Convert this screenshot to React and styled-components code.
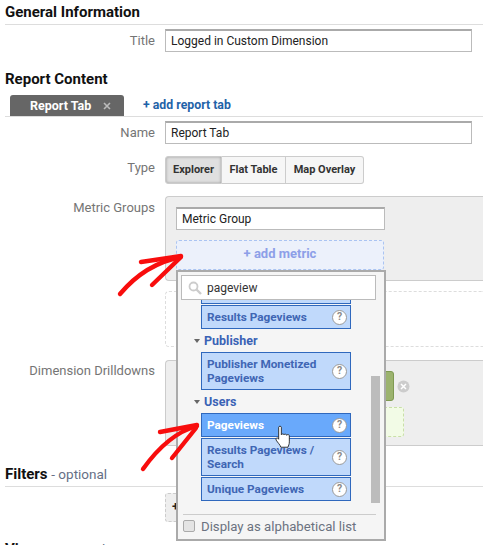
import React from 'react';
import styled, { createGlobalStyle } from 'styled-components';

const GlobalStyle = createGlobalStyle`
  html, body {
    margin: 0;
    padding: 0;
    background: #fff;
    font-family: Roboto, "Liberation Sans", sans-serif;
  }
`;

const Page = styled.div`
  position: relative;
  width: 483px;
  height: 545px;
  overflow: hidden;
  background: #fff;
`;

const Heading = styled.div`
  margin: ${(p) => p.$top}px 0 0 5px;
  height: ${(p) => p.$height || 19}px;
  line-height: ${(p) => p.$line || p.$height || 19}px;
  font-size: 15px;
  font-weight: 700;
  color: #111;
  border-bottom: ${(p) => (p.$rule ? '1px solid #ddd' : 'none')};

  span {
    font-size: 13.5px;
    font-weight: 400;
    color: #666f85;
  }
`;

const Row = styled.div`
  display: grid;
  grid-template-columns: 155px 1fr;
  column-gap: 10px;
  margin-top: ${(p) => p.$top}px;
`;

const Label = styled.div`
  text-align: right;
  font-size: 13px;
  line-height: ${(p) => p.$line || 23}px;
  color: #757575;
`;

const TextInput = styled.div`
  box-sizing: border-box;
  width: ${(p) => p.$width || 307}px;
  height: 23px;
  padding-left: 5px;
  line-height: 20px;
  font-size: 12px;
  color: #222;
  background: #fff;
  border: 1px solid #bbb;
  border-top: 2px solid #aaa;
`;

const TabBar = styled.div`
  display: flex;
  align-items: stretch;
  height: 21px;
  margin: 6px 0 0 5px;
  padding-left: 5px;
  border-bottom: 1px solid #ddd;
`;

const ActiveTab = styled.div`
  display: flex;
  align-items: center;
  justify-content: space-between;
  box-sizing: border-box;
  width: 114px;
  padding: 0 13px 0 20px;
  border-radius: 3px 3px 0 0;
  background: #666;
  color: #fff;
  font-size: 12.5px;
  font-weight: 700;

  svg {
    display: block;
  }
`;

const AddTab = styled.div`
  margin-left: 19px;
  line-height: 21px;
  font-size: 12.3px;
  font-weight: 700;
  color: #1f63a8;
`;

const ButtonGroup = styled.div`
  display: flex;
  width: 199px;
  height: 28px;
`;

const TypeButton = styled.div`
  box-sizing: border-box;
  flex: 0 0 ${(p) => p.$width}px;
  text-align: center;
  line-height: 26px;
  font-size: 11px;
  font-weight: 700;
  color: #333;
  background: ${(p) => (p.$active ? '#e0e0e0' : '#f6f6f6')};
  border: 1px solid #ccc;
  border-left-width: ${(p) => (p.$first ? 1 : 0)}px;
  border-radius: ${(p) => p.$radius};
  box-shadow: ${(p) => (p.$active ? 'inset 0 0 3px #999' : 'none')};
`;

const Panel = styled.div`
  box-sizing: border-box;
  height: ${(p) => p.$height}px;
  padding: 10px;
  background: #eee;
  border: 1px solid #ccc;
  border-right: none;
  border-radius: 4px 0 0 4px;
`;

const AddMetric = styled.div`
  box-sizing: border-box;
  width: 208px;
  height: 30px;
  margin-top: 10px;
  text-align: center;
  line-height: 26px;
  font-size: 13px;
  font-weight: 700;
  color: #8d9fe8;
  background: #ecf1fb;
  border: 1px dashed #aac4f2;
  border-radius: 3px;
`;

const DashedGroup = styled.div`
  box-sizing: border-box;
  height: 56px;
  margin-top: 10px;
  border: 1px dashed #ddd;
  border-right: none;
  border-radius: 4px 0 0 4px;
`;

const Chip = styled.div`
  box-sizing: border-box;
  width: 218px;
  height: 30px;
  background: #9cb36f;
  border: 1px solid #7f9a52;
  border-radius: 3px;
`;

const ChipRow = styled.div`
  display: flex;
  align-items: center;
  gap: 3px;
`;

const GreenSlot = styled.div`
  box-sizing: border-box;
  width: 228px;
  height: 30px;
  margin-top: 6px;
  background: #f2fbe6;
  border: 1px dashed #c9dfa8;
  border-radius: 3px;
`;

const AddFilter = styled.div`
  box-sizing: border-box;
  width: 60px;
  height: 29px;
  margin: 6px 0 0 165px;
  padding-left: 6px;
  line-height: 26px;
  font-size: 13px;
  font-weight: 700;
  color: #222;
  background: #eee;
  border: 1px dashed #ccc;
  border-radius: 3px;
`;

const Dropdown = styled.div`
  position: absolute;
  left: 176px;
  top: 270px;
  box-sizing: border-box;
  display: flex;
  flex-direction: column;
  width: 210px;
  height: 271px;
  padding: 3px 4px 0;
  background: #f5f5f5;
  border: 2px solid #aaa;
`;

const SearchBox = styled.div`
  position: relative;
  z-index: 1;
  flex: none;
  display: flex;
  align-items: center;
  gap: 5px;
  box-sizing: border-box;
  width: 195px;
  height: 25px;
  margin-left: -1px;
  padding-left: 6px;
  font-size: 12px;
  color: #333;
  background: #fff;
  border: 1px solid #bbb;
`;

const ListArea = styled.div`
  position: relative;
  flex: none;
  height: 212px;
  overflow: hidden;
`;

const List = styled.div`
  margin-top: -20px;
  padding-left: 19px;
`;

const Group = styled.div`
  display: flex;
  align-items: center;
  gap: 4px;
  height: 23px;
  margin: -1px 0 0 -7px;
  font-size: 12.5px;
  font-weight: 700;
  color: #3a62b5;
`;

const Caret = styled.i`
  width: 0;
  height: 0;
  border-style: solid;
  border-width: 4px 3.5px 0;
  border-color: #666 transparent transparent;
`;

const Item = styled.div`
  display: flex;
  align-items: center;
  justify-content: space-between;
  box-sizing: border-box;
  width: 150px;
  margin-bottom: 1px;
  padding: 4px 3px 4px 5px;
  min-height: 24px;
  line-height: 14px;
  font-size: 11.8px;
  font-weight: 700;
  color: ${(p) => (p.$active ? '#fff' : '#3f66b4')};
  background: ${(p) => (p.$active ? '#69a9fb' : '#c0d9fb')};
  border: 1px solid #2f68bd;

  span {
    max-width: 122px;
  }
`;

const Help = styled.b`
  flex: none;
  box-sizing: border-box;
  width: 15px;
  height: 15px;
  margin: -1px 0;
  text-align: center;
  line-height: 11.5px;
  font-size: 10.5px;
  font-weight: 700;
  color: #8a8a8a;
  background: #fff;
  border: 1.5px solid #9a9a9a;
  border-radius: 50%;
`;

const Scrollbar = styled.div`
  position: absolute;
  right: 0;
  bottom: 9px;
  width: 9px;
  height: 127px;
  background: #bcbcbc;
`;

const Footer = styled.div`
  display: flex;
  align-items: center;
  gap: 6px;
  height: 22px;
  margin: 2px 4px 0 1px;
  border-top: 1px solid #ccc;
  font-size: 13.2px;
  color: #6b7280;
`;

const Checkbox = styled.div`
  box-sizing: border-box;
  width: 12px;
  height: 12px;
  background: #e4e4e4;
  border: 1px solid #aaa;
  border-radius: 2px;
`;

const Overlay = styled.svg`
  position: absolute;
  left: 0;
  top: 0;
  pointer-events: none;
`;

const Hand = styled.svg`
  position: absolute;
  left: 275px;
  top: 425px;
`;

const Arrow = ({ d }) => (
  <path d={d} fill="none" stroke="#f80d0d" strokeWidth="4.4" strokeLinecap="round" strokeLinejoin="round" />
);

const App = () => (
  <Page>
    <GlobalStyle />
    <Heading $top={3} $height={21} $line={19} $rule>General Information</Heading>
    <Row $top={4}>
      <Label>Title</Label>
      <TextInput>Logged in Custom Dimension</TextInput>
    </Row>

    <Heading $top={18}>Report Content</Heading>
    <TabBar>
      <ActiveTab>
        Report Tab
        <svg width="8" height="8" viewBox="0 0 8 8">
          <path d="M1 1l6 6M7 1L1 7" stroke="#bbb" strokeWidth="1.6" />
        </svg>
      </ActiveTab>
      <AddTab>+ add report tab</AddTab>
    </TabBar>
    <Row $top={4}>
      <Label>Name</Label>
      <TextInput>Report Tab</TextInput>
    </Row>
    <Row $top={12}>
      <Label $line={24}>Type</Label>
      <ButtonGroup>
        <TypeButton $width={57} $first $active $radius="3px 0 0 3px">Explorer</TypeButton>
        <TypeButton $width={64} $radius="0">Flat Table</TypeButton>
        <TypeButton $width={78} $radius="0 3px 3px 0">Map Overlay</TypeButton>
      </ButtonGroup>
    </Row>
    <Row $top={12}>
      <Label $line={23}>Metric Groups</Label>
      <div>
        <Panel $height={85}>
          <TextInput $width={209}>Metric Group</TextInput>
          <AddMetric>+ add metric</AddMetric>
        </Panel>
        <DashedGroup />
      </div>
    </Row>
    <Row $top={13}>
      <Label $line={21}>Dimension Drilldowns</Label>
      <Panel $height={86}>
        <ChipRow>
          <Chip />
          <svg width="13" height="13" viewBox="0 0 13 13">
            <circle cx="6.5" cy="6.5" r="6" fill="#ccc" />
            <path d="M4 4l5 5M9 4l-5 5" stroke="#fff" strokeWidth="1.5" />
          </svg>
        </ChipRow>
        <GreenSlot />
      </Panel>
    </Row>

    <Heading $top={16} $height={24} $rule>Filters <span>- optional</span></Heading>
    <AddFilter>+</AddFilter>
    <Heading $top={18}>Views <span>- optional</span></Heading>

    <Dropdown>
      <SearchBox>
        <svg width="14" height="14" viewBox="0 0 14 14">
          <circle cx="5.5" cy="5.5" r="4" fill="none" stroke="#ccc" strokeWidth="1.8" />
          <path d="M8.5 8.5L13 13" stroke="#ccc" strokeWidth="2.4" />
        </svg>
        pageview
      </SearchBox>
      <ListArea>
        <List>
          <Item />
          <Item><span>Results Pageviews</span><Help>?</Help></Item>
          <Group><Caret />Publisher</Group>
          <Item><span>Publisher Monetized Pageviews</span><Help>?</Help></Item>
          <Group><Caret />Users</Group>
          <Item $active><span>Pageviews</span><Help>?</Help></Item>
          <Item><span>Results Pageviews / Search</span><Help>?</Help></Item>
          <Item><span>Unique Pageviews</span><Help>?</Help></Item>
        </List>
        <Scrollbar />
      </ListArea>
      <Footer>
        <Checkbox />
        Display as alphabetical list
      </Footer>
    </Dropdown>

    <Overlay width="483" height="545" viewBox="0 0 483 545">
      <Arrow d="M120 294C136 275 155 262 181 257" />
      <Arrow d="M141 262L181 256" />
      <Arrow d="M152 285L180 258" />
      <Arrow d="M143 469C158 448 175 432 197 426" />
      <Arrow d="M160 432L197 425" />
      <Arrow d="M172 458L196 428" />
    </Overlay>

    <Hand width="18" height="24" viewBox="0 0 20 27">
      <path
        d="M4 2.5C4 1 7 1 7 2.5V11C7 9.8 10 9.8 10 11.2C10 10 13 10 13 11.5C13 10.5 16 10.5 16 12V19C16 22 15 23 14.5 25H6.5C5.5 22 3 20 1.2 17C0 15 2.2 13.8 3.6 15.2L4 16Z"
        fill="#fff"
        stroke="#222"
        strokeWidth="1"
        strokeLinejoin="round"
      />
    </Hand>
  </Page>
);

export default App;
